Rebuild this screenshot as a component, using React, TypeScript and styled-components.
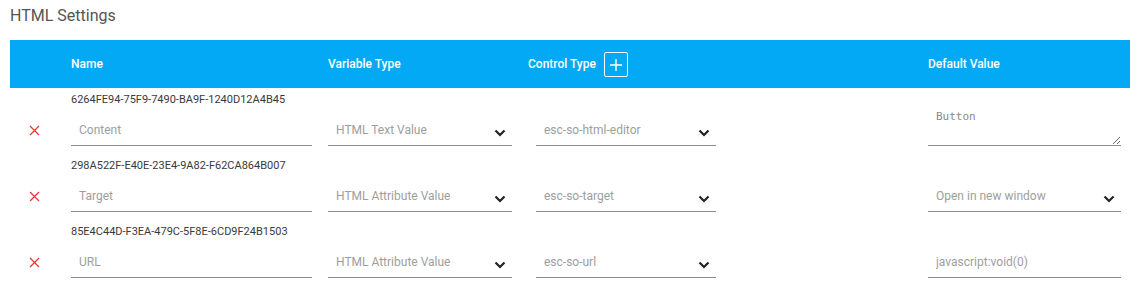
import React from 'react'
import styled, { createGlobalStyle } from 'styled-components'

const GlobalStyle = createGlobalStyle`
  body {
    margin: 0;
    background: #fff;
    font-family: Roboto, "Liberation Sans", sans-serif;
  }
`

const COLUMNS = '61px 257px 200px 400px 202px'

const Page = styled.div`
  padding: 0 12px 0 10px;
`

const Title = styled.h2`
  margin: 0 0 14px;
  padding-top: 6px;
  font-size: 16px;
  line-height: 20px;
  font-weight: 400;
  color: #555;
`

const HeaderBar = styled.div`
  display: grid;
  grid-template-columns: ${COLUMNS};
  height: 48px;
  align-items: center;
  background: #03a9f4;
  color: #fff;
  font-size: 12px;
  font-weight: 500;
`

const HeaderCell = styled.div`
  display: flex;
  align-items: center;
  gap: 8px;
`

const AddButton = styled.button`
  width: 24px;
  height: 25px;
  padding: 0;
  display: flex;
  align-items: center;
  justify-content: center;
  background: transparent;
  border: 1px solid #fff;
  border-radius: 2px;
  color: #fff;
  margin-top: 1px;
`

const Row = styled.div`
  display: grid;
  grid-template-columns: ${COLUMNS};
  grid-template-rows: 24px 34px;
  padding-bottom: 8px;
`

const Guid = styled.div`
  grid-column: 2;
  grid-row: 1;
  font-size: 11px;
  line-height: 24px;
  color: #3a3a3a;
`

const DeleteCell = styled.div`
  grid-column: 1;
  grid-row: 2;
  display: flex;
  align-items: center;
  justify-content: center;
  padding-right: 13px;
  padding-top: 2px;
`

const FieldCell = styled.div<{ col: number; indent?: number }>`
  grid-column: ${p => p.col};
  grid-row: 2;
  display: flex;
  align-items: flex-end;
  padding-left: ${p => p.indent || 0}px;
`

const AreaCell = styled.div`
  grid-column: 5;
  grid-row: 1 / 3;
  display: flex;
  align-items: flex-end;
`

const TextInput = styled.input<{ w: number }>`
  width: ${p => p.w}px;
  height: 34px;
  box-sizing: border-box;
  border: none;
  border-bottom: 1px solid #8c8c8c;
  padding: 3px 8px 0;
  font-family: Roboto, "Liberation Sans", sans-serif;
  font-size: 12px;
  color: #9e9e9e;
  outline: none;
  background: transparent;
  &::placeholder {
    color: #9e9e9e;
  }
`

const Select = styled.div<{ w: number }>`
  width: ${p => p.w}px;
  height: 34px;
  box-sizing: border-box;
  border-bottom: 1px solid #8c8c8c;
  padding: 3px 8px 0;
  display: flex;
  align-items: center;
  justify-content: space-between;
  font-size: 12px;
  color: #9e9e9e;
`

const Chevron = styled.svg`
  margin-top: 5px;
  margin-right: -2px;
`

const TextArea = styled.textarea`
  width: 193px;
  height: 40px;
  box-sizing: border-box;
  border: none;
  border-bottom: 1px solid #8c8c8c;
  padding: 4px 8px;
  font-family: "DejaVu Sans Mono", "Liberation Mono", monospace;
  font-size: 11px;
  color: #888;
  outline: none;
  background: transparent;
  &::placeholder {
    color: #888;
  }
`

const ChevronDown = () => (
  <Chevron width="12" height="8" viewBox="0 0 12 8">
    <path d="M1.5 1.5 L6 6 L10.5 1.5" fill="none" stroke="#222" strokeWidth="2.2" />
  </Chevron>
)

const CloseIcon = () => (
  <svg width="11" height="11" viewBox="0 0 11 11">
    <path d="M1 1 L10 10 M10 1 L1 10" stroke="#e53935" strokeWidth="1.3" />
  </svg>
)

const PlusIcon = () => (
  <svg width="12" height="12" viewBox="0 0 12 12">
    <path d="M6 0 V12 M0 6 H12" stroke="#fff" strokeWidth="1.4" />
  </svg>
)

type Setting = {
  id: string
  name: string
  varType: string
  control: string
  def: { kind: 'area' | 'select' | 'input'; value: string }
}

const settings: Setting[] = [
  {
    id: '6264FE94-75F9-7490-BA9F-1240D12A4B45',
    name: 'Content',
    varType: 'HTML Text Value',
    control: 'esc-so-html-editor',
    def: { kind: 'area', value: 'Button' },
  },
  {
    id: '298A522F-E40E-23E4-9A82-F62CA864B007',
    name: 'Target',
    varType: 'HTML Attribute Value',
    control: 'esc-so-target',
    def: { kind: 'select', value: 'Open in new window' },
  },
  {
    id: '85E4C44D-F3EA-479C-5F8E-6CD9F24B1503',
    name: 'URL',
    varType: 'HTML Attribute Value',
    control: 'esc-so-url',
    def: { kind: 'input', value: 'javascript:void(0)' },
  },
]

const DefaultField = ({ def }: { def: Setting['def'] }) => {
  if (def.kind === 'area') {
    return (
      <AreaCell>
        <TextArea placeholder={def.value} />
      </AreaCell>
    )
  }
  if (def.kind === 'select') {
    return (
      <FieldCell col={5}>
        <Select w={193}>
          <span>{def.value}</span>
          <ChevronDown />
        </Select>
      </FieldCell>
    )
  }
  return (
    <FieldCell col={5}>
      <TextInput w={193} placeholder={def.value} />
    </FieldCell>
  )
}

export default function App() {
  return (
    <Page>
      <GlobalStyle />
      <Title>HTML Settings</Title>
      <HeaderBar>
        <div />
        <HeaderCell>Name</HeaderCell>
        <HeaderCell>Variable Type</HeaderCell>
        <HeaderCell>
          Control Type
          <AddButton>
            <PlusIcon />
          </AddButton>
        </HeaderCell>
        <HeaderCell>Default Value</HeaderCell>
      </HeaderBar>
      {settings.map(s => (
        <Row key={s.id}>
          <Guid>{s.id}</Guid>
          <DeleteCell>
            <CloseIcon />
          </DeleteCell>
          <FieldCell col={2}>
            <TextInput w={241} placeholder={s.name} />
          </FieldCell>
          <FieldCell col={3}>
            <Select w={184}>
              <span>{s.varType}</span>
              <ChevronDown />
            </Select>
          </FieldCell>
          <FieldCell col={4} indent={8}>
            <Select w={180}>
              <span>{s.control}</span>
              <ChevronDown />
            </Select>
          </FieldCell>
          <DefaultField def={s.def} />
        </Row>
      ))}
    </Page>
  )
}
